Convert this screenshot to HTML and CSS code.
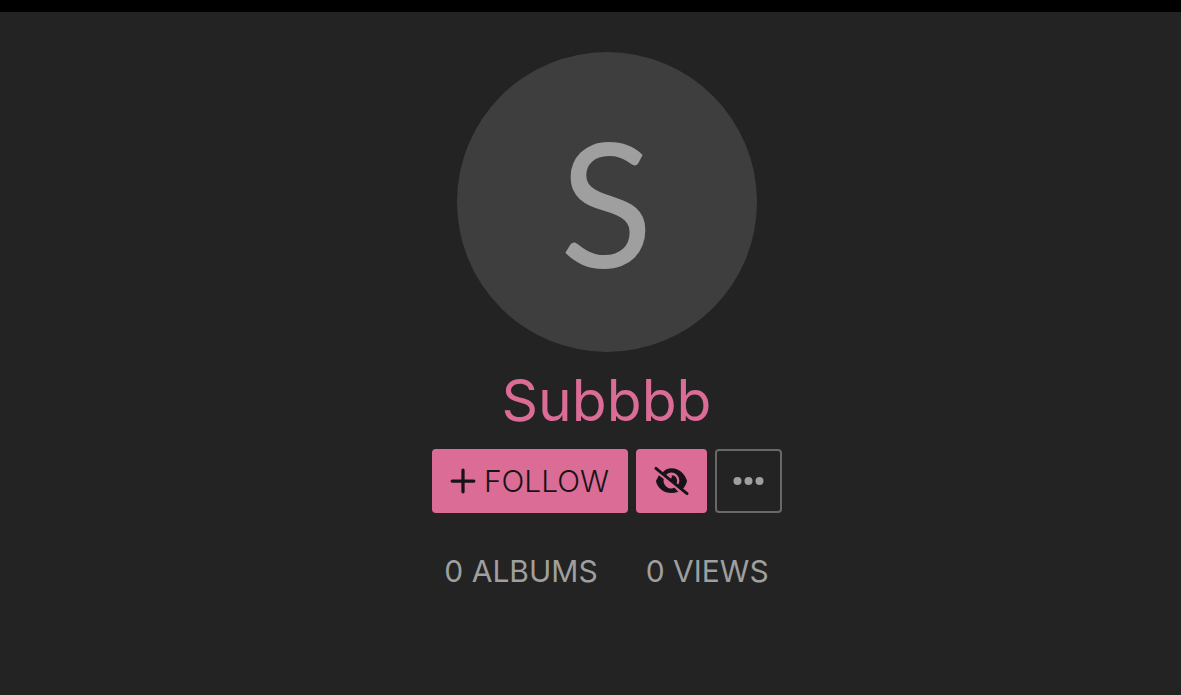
FILE: index.html
```html
<!DOCTYPE html>
<html lang="en">
<head>
<meta charset="utf-8">
<meta name="viewport" content="width=device-width, initial-scale=1">
<title>Subbbb</title>
<link rel="stylesheet" href="styles.css">
</head>
<body>
<main class="profile">
  <div class="avatar" aria-hidden="true">S</div>
  <h1 class="name">Subbbb</h1>
  <div class="actions">
    <button class="button follow" type="button">
      <svg class="plus" viewBox="0 0 24 24" aria-hidden="true"><path d="M12 2v20M2 12h20"/></svg>
      <span>FOLLOW</span>
    </button>
    <button class="button hide" type="button" aria-label="Hide user">
      <svg class="eye" viewBox="0 0 36 30" aria-hidden="true">
        <path class="lid" d="M9 6C12 3 15 2 18 2c8 0 14 6 16 13-1 4-3 7-5 9L24 20A8 8 0 0 0 12 9Z"/>
        <path class="lid" d="M5 9 10 13a8 8 0 0 0 11 9l4 4C15 30 4 25 2 15c1-2 2-4 3-6Z"/>
        <path class="lid" d="M18 9c5 0 7 5 5 9l-6-5c1-1 2-3 1-4Z"/>
        <path class="slash" d="M2 2l32 26"/>
      </svg>
    </button>
    <button class="button more" type="button" aria-label="More options">
      <svg class="dots" viewBox="0 0 30 8" aria-hidden="true"><circle cx="4" cy="4" r="4"/><circle cx="15" cy="4" r="4"/><circle cx="26" cy="4" r="4"/></svg>
    </button>
  </div>
  <div class="stats"><span>0 ALBUMS</span><span>0 VIEWS</span></div>
</main>
</body>
</html>
```
FILE: styles.css
```css
* { box-sizing: border-box; }
body {
  margin: 0;
  min-height: 100vh;
  background: #232323;
  border-top: 12px solid #000;
  font-family: Inter, "Liberation Sans", sans-serif;
  color: #9f9f9f;
}
.profile {
  display: flex;
  flex-direction: column;
  align-items: center;
  padding: 40px 0 40px 32px;
}
.avatar {
  display: flex;
  align-items: center;
  justify-content: center;
  width: 300px;
  height: 300px;
  border-radius: 50%;
  background: #3e3e3e;
  font-family: Lato, "Liberation Sans", sans-serif;
  font-size: 172px;
  line-height: 1;
}
.name {
  margin: 16px 0;
  font-size: 57px;
  font-weight: 400;
  line-height: 65px;
  color: #db6c96;
}
.actions { display: flex; gap: 8px; }
.button {
  display: flex;
  align-items: center;
  justify-content: center;
  height: 64px;
  padding: 0 18px;
  border: 0;
  border-radius: 4px;
  background: #db6c96;
  color: #171317;
  font: inherit;
  font-size: 30px;
  cursor: pointer;
}
.follow { gap: 8px; min-width: 196px; font-weight: 300; }
.more {
  padding: 0 16px;
  border: 2px solid #686868;
  background: transparent;
  color: #9f9f9f;
}
.plus {
  width: 26px;
  height: 26px;
  fill: none;
  stroke: currentColor;
  stroke-width: 3;
  stroke-linecap: round;
}
.eye { width: 35px; height: 30px; }
.lid { fill: currentColor; }
.slash { stroke: currentColor; stroke-width: 3; stroke-linecap: round; }
.dots { width: 31px; height: 8px; fill: currentColor; }
.stats {
  display: flex;
  gap: 48px;
  margin-top: 40px;
  font-size: 30px;
  line-height: 36px;
}
```
